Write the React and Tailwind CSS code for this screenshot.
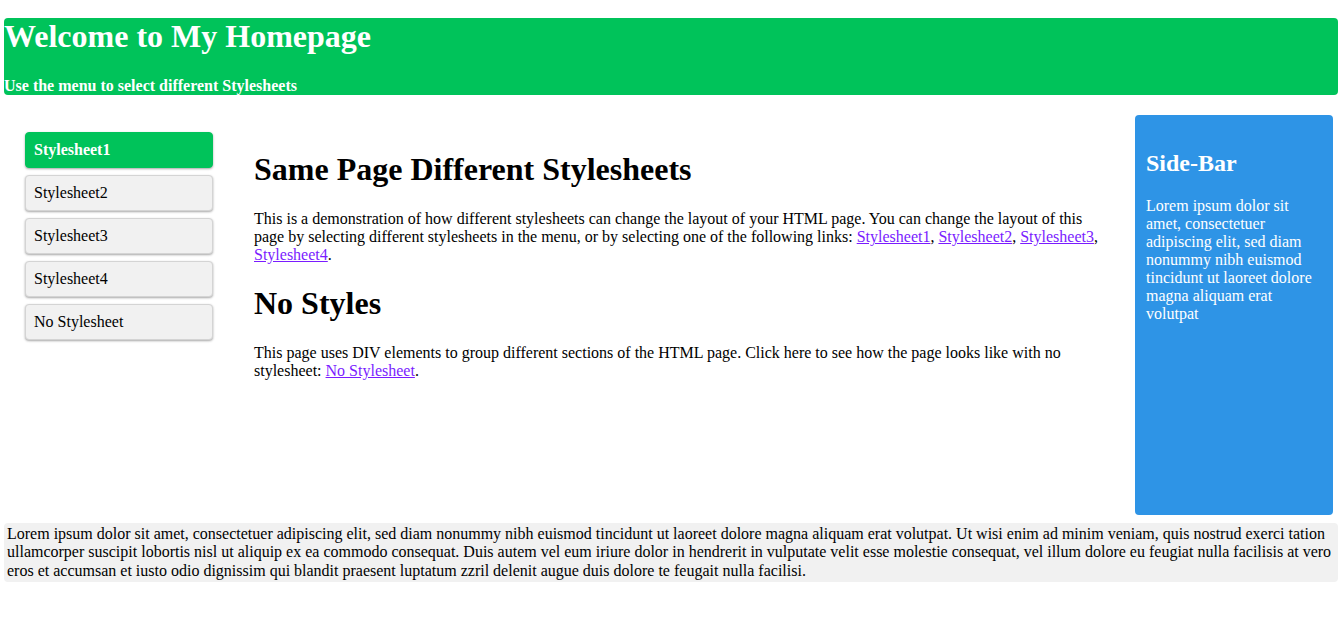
export default function App() {
  const menu = ['Stylesheet1', 'Stylesheet2', 'Stylesheet3', 'Stylesheet4', 'No Stylesheet'];
  const link = 'text-[#7a1cff] underline';

  return (
    <div className="min-h-[631px] bg-white text-black font-['Liberation_Serif',serif] text-base leading-[18px]">
      <div className="ml-[4px] w-[1334px] pt-[18px]">
        {/* Header */}
        <div className="bg-[#00c35a] text-white rounded-[4px]">
          <h1 className="text-[32px] leading-[37px] font-bold">Welcome to My Homepage</h1>
          <h3 className="mt-[22px] text-base leading-[18px] font-bold">Use the menu to select different Stylesheets</h3>
        </div>

        {/* Main row */}
        <div className="mt-[20px] flex h-[400px]">
          <div className="w-[250px] pt-[17px] pl-[21px]">
            <div className="flex flex-col gap-[7px] w-[188px]">
              {menu.map((m, i) => (
                <div
                  key={m}
                  className={
                    i === 0
                      ? 'bg-[#00c35a] text-white font-bold border border-[#00c35a] rounded-[4px] px-[8px] py-[8px] shadow-[0_1px_3px_rgba(0,0,0,0.12),0_1px_2px_rgba(0,0,0,0.24)]'
                      : 'bg-[#f1f1f1] border border-[#d4d4d4] rounded-[4px] px-[8px] py-[8px] shadow-[0_1px_3px_rgba(0,0,0,0.12),0_1px_2px_rgba(0,0,0,0.24)]'
                  }
                >
                  {m}
                </div>
              ))}
            </div>
          </div>

          <div className="w-[861px] pt-[15px]">
            <h2 className="mt-[21px] text-[32px] leading-[37px] font-bold">Same Page Different Stylesheets</h2>
            <p className="mt-[22px]">
              This is a demonstration of how different stylesheets can change the layout of your HTML page. You can change the layout of this page by selecting different stylesheets in the menu, or by selecting one of the following links:{' '}
              <a className={link}>Stylesheet1</a>, <a className={link}>Stylesheet2</a>,{' '}
              <a className={link}>Stylesheet3</a>, <a className={link}>Stylesheet4</a>.
            </p>
            <h2 className="mt-[21px] text-[32px] leading-[37px] font-bold">No Styles</h2>
            <p className="mt-[22px]">
              This page uses DIV elements to group different sections of the HTML page. Click here to see how the page looks like with no stylesheet:{' '}
              <a className={link}>No Stylesheet</a>.
            </p>
          </div>

          <div className="ml-[20px] w-[198px] bg-[#2e94e6] text-white rounded-[4px] px-[11px] pt-[14px]">
            <h2 className="mt-[20px] text-[24px] leading-[28px] font-bold">Side-Bar</h2>
            <p className="mt-[20px]">
              Lorem ipsum dolor sit amet, consectetuer adipiscing elit, sed diam nonummy nibh euismod tincidunt ut laoreet dolore magna aliquam erat volutpat
            </p>
          </div>
        </div>

        {/* Footer */}
        <div className="mt-[8px] bg-[#f1f1f1] rounded-[4px] px-[3px] py-[2px] leading-[18.4px]">
          Lorem ipsum dolor sit amet, consectetuer adipiscing elit, sed diam nonummy nibh euismod tincidunt ut laoreet dolore magna aliquam erat volutpat. Ut wisi enim ad minim veniam, quis nostrud exerci tation ullamcorper suscipit lobortis nisl ut aliquip ex ea commodo consequat. Duis autem vel eum iriure dolor in hendrerit in vulputate velit esse molestie consequat, vel illum dolore eu feugiat nulla facilisis at vero eros et accumsan et iusto odio dignissim qui blandit praesent luptatum zzril delenit augue duis dolore te feugait nulla facilisi.
        </div>
      </div>
    </div>
  );
}
